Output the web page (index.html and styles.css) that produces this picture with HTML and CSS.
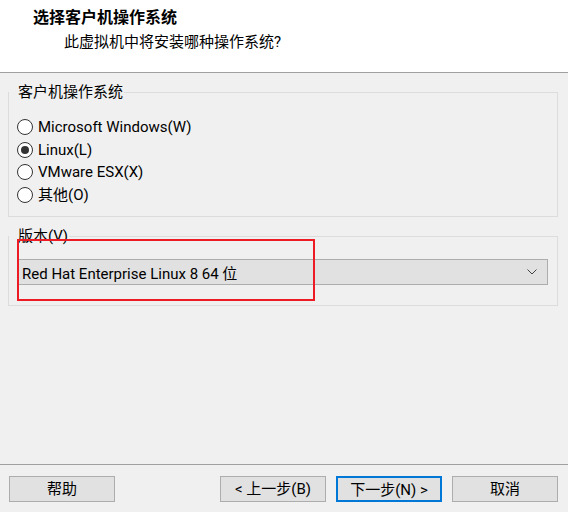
FILE: index.html
```html
<!DOCTYPE html>
<html lang="zh-CN">
<head>
<meta charset="utf-8">
<title>新建虚拟机向导</title>
<link rel="stylesheet" href="styles.css">
</head>
<body>
<div class="wizard">
  <header class="head">
    <div class="title">选择客户机操作系统</div>
    <div class="subtitle">此虚拟机中将安装哪种操作系统?</div>
  </header>
  <main class="main">
    <fieldset class="group group-os">
      <legend>客户机操作系统</legend>
      <label class="radio"><span class="dot"></span>Microsoft Windows(W)</label>
      <label class="radio"><span class="dot checked"></span>Linux(L)</label>
      <label class="radio"><span class="dot"></span>VMware ESX(X)</label>
      <label class="radio"><span class="dot"></span>其他(O)</label>
    </fieldset>
    <fieldset class="group group-ver">
      <legend>版本(V)</legend>
      <div class="combo">
        <span class="combo-text">Red Hat Enterprise Linux 8 64 位</span>
        <svg class="chev" width="10" height="6" viewBox="0 0 10 6"><polyline points="0.5,0.5 5,5 9.5,0.5" fill="none" stroke="#444" stroke-width="1"/></svg>
      </div>
      <div class="highlight"></div>
    </fieldset>
  </main>
  <footer class="foot">
    <button class="btn">帮助</button>
    <div class="spacer"></div>
    <button class="btn">&lt; 上一步(B)</button>
    <button class="btn primary">下一步(N) &gt;</button>
    <button class="btn">取消</button>
  </footer>
</div>
</body>
</html>
```

FILE: styles.css
```css
html, body {
  margin: 0;
  padding: 0;
}
body {
  background: #f0f0f0;
  font-family: Roboto, "Noto Sans CJK SC", sans-serif;
  font-size: 15px;
  color: #000;
}
.wizard {
  width: 568px;
  height: 512px;
  display: flex;
  flex-direction: column;
}
.head {
  height: 72px;
  flex: none;
  background: #fff;
  border-bottom: 1px solid #a0a0a0;
  padding-left: 33px;
  box-sizing: content-box;
}
.title {
  font-weight: bold;
  font-size: 16px;
  line-height: 20px;
  margin-top: 8px;
}
.subtitle {
  line-height: 20px;
  margin-top: 4px;
  padding-left: 31px;
}
.main {
  flex: 1;
  padding: 9px 10px 0 8px;
}
.group {
  margin: 0;
  border: 1px solid #dcdcdc;
  padding: 0 9px 0 8px;
  min-width: 0;
}
.group legend {
  line-height: 20px;
  margin-left: -8px;
  padding: 0 1px 0 9px;
}
.group-os {
  padding-top: 14px;
  padding-bottom: 10px;
}
.radio {
  display: flex;
  align-items: center;
  height: 22.5px;
  line-height: 22px;
}
.dot {
  width: 14px;
  height: 14px;
  border: 1px solid #333;
  border-radius: 50%;
  background: #fff;
  margin-right: 5px;
  display: flex;
  align-items: center;
  justify-content: center;
  flex: none;
}
.dot.checked::after {
  content: "";
  width: 8px;
  height: 8px;
  border-radius: 50%;
  background: #333;
}
.group-ver {
  margin-top: 9px;
  padding-top: 12px;
  padding-bottom: 20px;
  position: relative;
}
.combo {
  height: 24px;
  margin-top: 1px;
  border: 1px solid #adadad;
  background: #e1e1e1;
  display: flex;
  align-items: center;
  padding: 0 10px 0 4px;
}
.combo-text {
  flex: 1;
}
.chev {
  display: block;
}
.highlight {
  position: absolute;
  left: 8px;
  top: -7px;
  width: 294px;
  height: 58px;
  border: 2px solid #ed1c24;
}
.foot {
  flex: none;
  height: 48px;
  box-sizing: border-box;
  border-top: 1px solid #a0a0a0;
  display: flex;
  align-items: flex-start;
  gap: 10px;
  padding: 11px 10px 0 9px;
}
.spacer {
  flex: 1;
}
.btn {
  width: 106px;
  height: 26px;
  border: 1px solid #adadad;
  background: #e1e1e1;
  font: inherit;
  color: #000;
  padding: 0;
  line-height: 24px;
}
.btn.primary {
  border: 2px solid #0078d7;
}
```
